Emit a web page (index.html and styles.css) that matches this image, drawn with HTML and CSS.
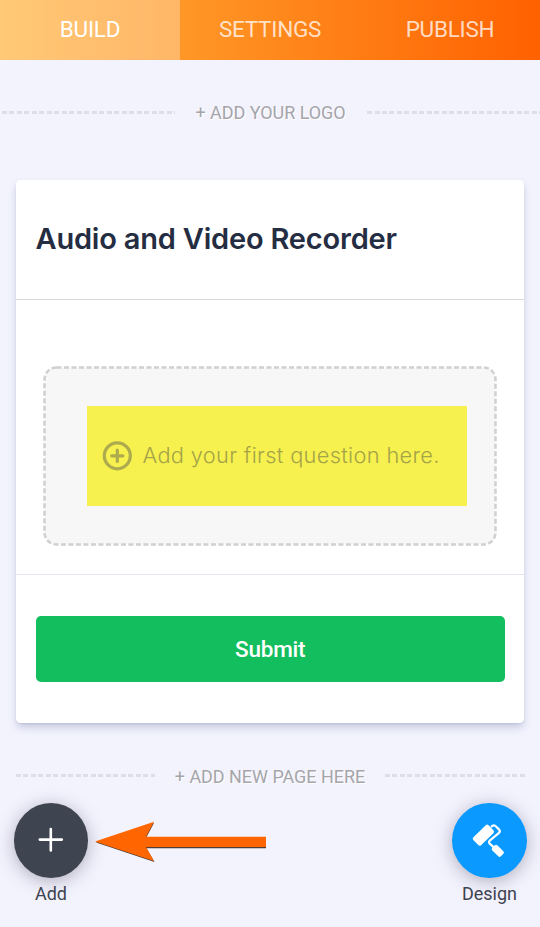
FILE: index.html
```html
<!DOCTYPE html>
<html lang="en">
<head>
<meta charset="utf-8">
<meta name="viewport" content="width=device-width, initial-scale=1">
<title>Form Builder</title>
<link rel="stylesheet" href="styles.css">
</head>
<body>
<nav class="tabs">
  <a class="tab active">BUILD</a>
  <a class="tab">SETTINGS</a>
  <a class="tab">PUBLISH</a>
</nav>
<main>
  <div class="divider logo-row"><i class="dash dash-start"></i><span class="divider-text">+ ADD YOUR LOGO</span><i class="dash"></i></div>
  <section class="card">
    <header class="card-head"><h1>Audio and Video Recorder</h1></header>
    <div class="card-body">
      <div class="dropzone">
        <svg class="outline" width="454" height="180" viewBox="0 0 454 180"><rect x="1.5" y="1.5" width="451" height="177" rx="12" fill="#f7f7f7" stroke="#d0d0d0" stroke-width="2.5" stroke-dasharray="5 2.5"/></svg>
        <div class="highlight">
          <svg width="30" height="30" viewBox="0 0 30 30" fill="none" stroke="#adab4e"><circle cx="15.3" cy="14.8" r="13" stroke-width="3.2"/><path d="M15.3 9.2v11.2M9.7 14.8h11.2" stroke-width="3.2" stroke-linecap="round"/></svg>
          <span class="prompt">Add your first question here.</span>
        </div>
      </div>
    </div>
    <footer class="card-foot"><button class="submit">Submit</button></footer>
  </section>
  <div class="divider page-row"><i class="dash"></i><span class="divider-text">+ ADD NEW PAGE HERE</span><i class="dash"></i></div>
</main>
<div class="actions">
  <div class="action">
    <div class="fab dark"><svg width="74" height="75" viewBox="0 0 74 75"><path d="M36.8 26v21.4M25.8 36.6h22" stroke="#fff" stroke-width="2.6" stroke-linecap="round"/></svg></div>
    <span class="label">Add</span>
  </div>
  <svg class="arrow" width="174" height="44" viewBox="0 0 174 44">
    <path d="M2 22.4 60.5 42l-8-13.7H172V18H52L60 3z" fill="#514035"/>
    <path d="M1 21.5 60 1.7 52 16.7H172V27H52l8 14z" fill="#ff6500"/>
  </svg>
  <div class="action">
    <div class="fab blue"><svg width="75" height="75" viewBox="0 0 75 75"><g fill="#fff"><rect x="-10.6" y="-5.5" width="21.2" height="11" rx="2" transform="translate(31.4 32.2) rotate(-44)"/><rect x="-6" y="-3.6" width="12" height="7.2" rx="1.8" transform="translate(45.8 47.8) rotate(44)"/></g><path d="M39 24l1.6-1.3q1.5-.8 2.8.3l3.8 3.6q1.4 1.6-.2 3.2L37.7 37.6q-1.3 1.5 0 3l4.4 4" fill="none" stroke="#fff" stroke-width="2.2" stroke-linejoin="round"/></svg></div>
    <span class="label">Design</span>
  </div>
</div>
</body>
</html>
```

FILE: styles.css
```css
* { box-sizing: border-box; }
body {
  margin: 0;
  height: 927px;
  overflow: hidden;
  background: #f3f3fe;
  font-family: Roboto, sans-serif;
  color: #3d434f;
}
.tabs {
  display: flex;
  height: 60px;
  background: linear-gradient(90deg, #ffb23a 0%, #ff6100 100%);
}
.tab {
  flex: 1;
  display: flex;
  align-items: center;
  justify-content: center;
  padding-bottom: 2px;
  font-size: 22.5px;
  letter-spacing: -.25px;
  color: rgba(255, 255, 255, .76);
}
.tab.active { color: #fff; background: rgba(255, 255, 255, .3); }
.divider { display: flex; align-items: center; }
.logo-row { height: 120px; padding: 0 0 14px; gap: 21px; }
.page-row { height: 80px; margin: 14px 15.5px 0; gap: 20px; }
.dash {
  flex: 1;
  height: 3px;
  margin-top: -1px;
  background: repeating-linear-gradient(90deg, #dedee8 0 5px, transparent 5px 7.5px);
}
.dash-start { margin-left: 1.5px; }
.page-row .dash { margin-top: -3px; }
.divider-text {
  font-size: 18px;
  line-height: 24px;
  letter-spacing: -.04px;
  color: #a5a5aa;
  text-shadow: 1px 1px 0 #fff;
  white-space: nowrap;
}
.logo-row .divider-text { margin-left: -.5px; }
.card {
  display: flex;
  flex-direction: column;
  width: 508.4px;
  height: 543px;
  margin-left: 16px;
  background: #fff;
  border-radius: 4.5px;
  box-shadow: 0 5px 8px -1px rgba(84, 95, 140, .3), 0 1px 2px rgba(84, 95, 140, .12);
}
.card-head {
  height: 120px;
  padding: 41px 19.5px 0;
  border-bottom: 1px solid #d9dbe0;
}
h1 {
  margin: 0;
  font: 600 29px/36px Inter, sans-serif;
  letter-spacing: -.2px;
  color: #252d42;
  white-space: nowrap;
}
.card-body {
  height: 275px;
  padding: 66px 0 0 27px;
  border-bottom: 1px solid #e4e5ef;
}
.dropzone {
  position: relative;
  width: 454px;
  height: 180px;
  padding: 40px 30px 40px 44px;
}
.outline { position: absolute; inset: 0; }
.highlight {
  position: relative;
  display: flex;
  align-items: center;
  gap: 10.5px;
  height: 100px;
  padding-left: 15px;
  background: #f6f14e;
}
.prompt {
  padding-bottom: 2px;
  font: 300 21.8px/28px Inter, sans-serif;
  letter-spacing: .33px;
  color: #a5a349;
  white-space: nowrap;
}
.card-foot { padding: 41px 19.5px; }
.submit {
  display: block;
  width: 100%;
  height: 66.5px;
  padding: 0;
  border: 0;
  border-radius: 5px;
  background: #12be5d;
  color: #fff;
  font: 500 22.5px Roboto, sans-serif;
  letter-spacing: -.2px;
}
.actions {
  display: flex;
  align-items: flex-start;
  margin: -14px 13.5px 0 14px;
}
.action {
  display: flex;
  flex-direction: column;
  align-items: center;
  width: 74px;
}
.action:last-child { margin-left: auto; }
.fab {
  width: 74.5px;
  height: 75px;
  border-radius: 50%;
  box-shadow: 0 3px 18px rgba(55, 48, 70, .36);
}
.fab svg { display: block; }
.dark { background: #3e4450; }
.blue { background: #0999ff; }
.label { margin-top: 4px; font-size: 18px; line-height: 24px; }
.arrow { margin: 17px 0 0 6px; }
```
